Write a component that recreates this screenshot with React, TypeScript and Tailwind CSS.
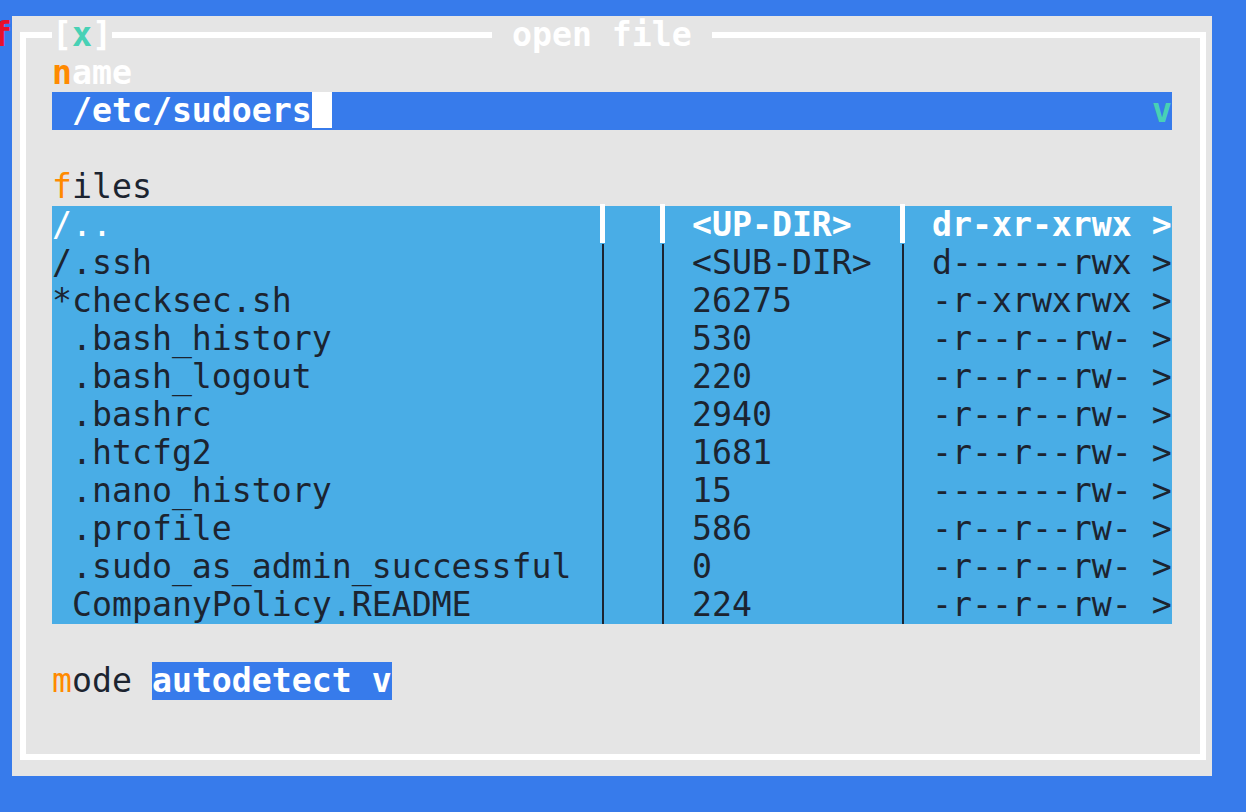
import React from "react";

const mono = { fontFamily: '"DejaVu Sans Mono", "Liberation Mono", monospace' };

type Row = { name: string; size: string; perm: string; sel?: boolean };

const rows: Row[] = [
  { name: "/..", size: " <UP-DIR>", perm: " dr-xr-xrwx >", sel: true },
  { name: "/.ssh", size: " <SUB-DIR>", perm: " d------rwx >" },
  { name: "*checksec.sh", size: " 26275", perm: " -r-xrwxrwx >" },
  { name: " .bash_history", size: " 530", perm: " -r--r--rw- >" },
  { name: " .bash_logout", size: " 220", perm: " -r--r--rw- >" },
  { name: " .bashrc", size: " 2940", perm: " -r--r--rw- >" },
  { name: " .htcfg2", size: " 1681", perm: " -r--r--rw- >" },
  { name: " .nano_history", size: " 15", perm: " -------rw- >" },
  { name: " .profile", size: " 586", perm: " -r--r--rw- >" },
  { name: " .sudo_as_admin_successful", size: " 0", perm: " -r--r--rw- >" },
  { name: " CompanyPolicy.README", size: " 224", perm: " -r--r--rw- >" },
];

function Sep({ sel }: { sel?: boolean }) {
  return (
    <div className="relative w-[20px] h-[38px] shrink-0">
      {sel ? (
        <div className="absolute left-[8px] top-[-2px] w-[5px] h-[39px] bg-white" />
      ) : (
        <div className="absolute left-[10px] top-0 w-[2px] h-[38px] bg-[#1c2430]" />
      )}
    </div>
  );
}

export default function App() {
  return (
    <div
      className="w-[1246px] h-[812px] bg-[#377beb] overflow-hidden flex items-start pt-[16px] text-[33.2px] leading-[38px] whitespace-pre"
      style={mono}
    >
      <div className="w-[20px] -ml-[8px] h-[38px] text-[#e8102a] font-bold shrink-0">f</div>
      <div className="w-[1200px] h-[760px] bg-[#e5e5e5] pl-[8px] pr-[6px] pt-[16px] shrink-0">
        <div className="relative h-[728px] border-[6px] border-white">
          {/* title bar over top border */}
          <div className="absolute left-[-6px] top-[-22px] h-[38px] flex items-center pl-[32px]">
            <span className="bg-[#e5e5e5] text-white font-bold">
              [<span className="text-[#48d1b5]">x</span>]
            </span>
            <div className="w-[380px] shrink-0" />
            <span className="bg-[#e5e5e5] text-white font-bold"> open file </span>
          </div>

          <div className="pl-[26px] pt-[16px] w-[1146px]">
            {/* name */}
            <div className="h-[38px] font-bold text-white">
              <span className="text-[#ff8a00]">n</span>ame
            </div>
            <div className="h-[38px] w-[1120px] bg-[#377beb] flex items-start">
              <span className="text-white font-bold"> /etc/sudoers</span>
              <div className="w-[20px] h-[36px] bg-white" />
              <div className="flex-1" />
              <span className="text-[#48d1b5] font-bold">v</span>
            </div>
            <div className="h-[38px]" />
            {/* files */}
            <div className="h-[38px] text-[#1c2430]">
              <span className="text-[#ff8a00]">f</span>iles
            </div>
            <div className="w-[1120px] bg-[#49ade6] flex flex-col">
              {rows.map((r, i) => (
                <div
                  key={i}
                  className={`flex h-[38px] ${r.sel ? "text-white font-bold" : "text-[#1c2430]"}`}
                >
                  <div className={`w-[540px] shrink-0 ${r.sel ? "font-normal" : ""}`}>{r.name}</div>
                  <Sep sel={r.sel} />
                  <div className="w-[40px] shrink-0" />
                  <Sep sel={r.sel} />
                  <div className="w-[220px] shrink-0">{r.size}</div>
                  <Sep sel={r.sel} />
                  <div className="w-[260px] shrink-0">{r.perm}</div>
                </div>
              ))}
            </div>
            <div className="h-[38px]" />
            {/* mode */}
            <div className="h-[38px] flex text-[#1c2430]">
              <span>
                <span className="text-[#ff8a00]">m</span>ode{" "}
              </span>
              <span className="bg-[#377beb] text-white font-bold">autodetect v</span>
            </div>
          </div>
        </div>
      </div>
    </div>
  );
}
